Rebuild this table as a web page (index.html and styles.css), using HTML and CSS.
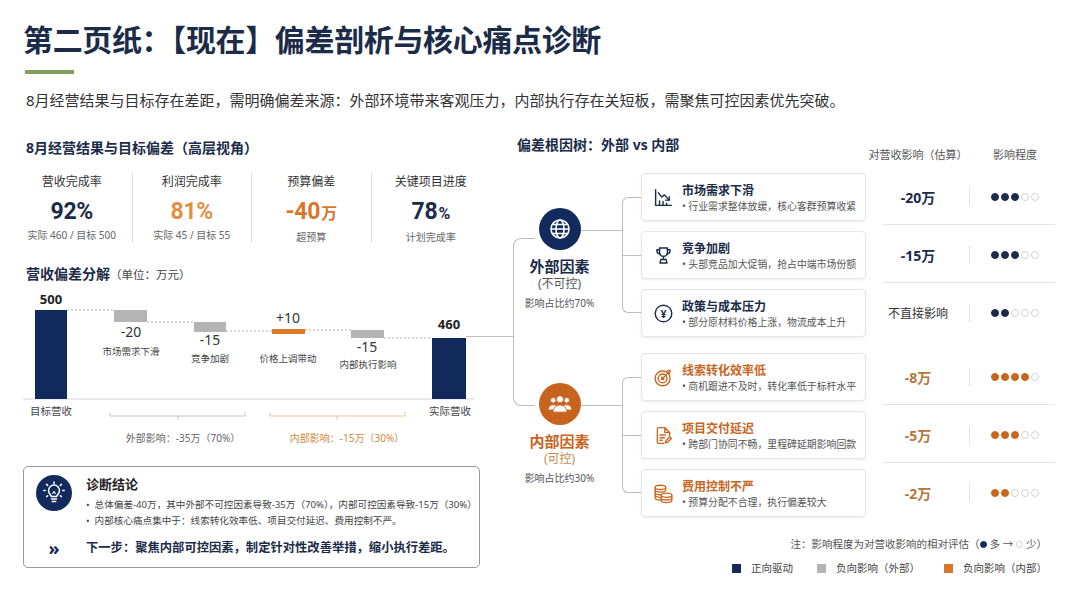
FILE: index.html
```html
<!DOCTYPE html>
<html lang="zh-CN">
<head>
<meta charset="utf-8">
<title>偏差剖析与核心痛点诊断</title>
<link rel="stylesheet" href="styles.css">
</head>
<body>
<div class="page">
  <header class="hd">
    <h1 class="title">第二页纸：【现在】偏差剖析与核心痛点诊断</h1>
    <div class="accent"></div>
    <p class="lead">8月经营结果与目标存在差距，需明确偏差来源：外部环境带来客观压力，内部执行存在关短板，需聚焦可控因素优先突破。</p>
  </header>

  <main class="main">
    <section class="left">
      <h2 class="sec first">8月经营结果与目标偏差（高层视角）</h2>
      <div class="kpis">
        <div class="kpi">
          <div class="kpi-l">营收完成率</div>
          <div class="kpi-v navy">92%</div>
          <div class="kpi-s">实际 460 / 目标 500</div>
        </div>
        <div class="kpi">
          <div class="kpi-l">利润完成率</div>
          <div class="kpi-v amber">81%</div>
          <div class="kpi-s">实际 45 / 目标 55</div>
        </div>
        <div class="kpi">
          <div class="kpi-l">预算偏差</div>
          <div class="kpi-v orange">-40<span class="small">万</span></div>
          <div class="kpi-s">超预算</div>
        </div>
        <div class="kpi">
          <div class="kpi-l">关键项目进度</div>
          <div class="kpi-v navy">78<span class="small">%</span></div>
          <div class="kpi-s">计划完成率</div>
        </div>
      </div>

      <h2 class="sec sec2">营收偏差分解<span class="unit">（单位：万元）</span></h2>
      <svg class="wf" width="457" height="162" viewBox="23 284 457 162">
        <line class="axis" x1="23" y1="398" x2="475" y2="398"/>
        <g class="dash">
          <line x1="67" y1="309" x2="114" y2="309"/>
          <line x1="147" y1="321" x2="194" y2="321"/>
          <line x1="226" y1="330" x2="272" y2="330"/>
          <line x1="305" y1="329" x2="351" y2="329"/>
          <line x1="384" y1="337" x2="432" y2="337"/>
        </g>
        <rect class="b-navy" x="35" y="309" width="32" height="89"/>
        <rect class="b-gray" x="114" y="309" width="33" height="12"/>
        <rect class="b-gray" x="194" y="321" width="32" height="10"/>
        <rect class="b-orange" x="272" y="328" width="33" height="5"/>
        <rect class="b-gray" x="351" y="329" width="33" height="8"/>
        <rect class="b-navy" x="432" y="337" width="34" height="61"/>

        <text class="t-tot" x="51" y="303" text-anchor="middle">500</text>
        <text class="t-num" x="131" y="336" text-anchor="middle">-20</text>
        <text class="t-lab" x="131" y="354" text-anchor="middle">市场需求下滑</text>
        <text class="t-num" x="210" y="344" text-anchor="middle">-15</text>
        <text class="t-lab" x="210" y="361" text-anchor="middle">竞争加剧</text>
        <text class="t-num" x="288" y="322" text-anchor="middle">+10</text>
        <text class="t-lab" x="288" y="361" text-anchor="middle">价格上调带动</text>
        <text class="t-num" x="367" y="351" text-anchor="middle">-15</text>
        <text class="t-lab" x="368" y="367" text-anchor="middle">内部执行影响</text>
        <text class="t-tot" x="449" y="328" text-anchor="middle">460</text>

        <text class="t-ax" x="51" y="414" text-anchor="middle">目标营收</text>
        <text class="t-ax" x="450" y="414" text-anchor="middle">实际营收</text>

        <path class="br-g" d="M110 411V415H245V411M178 415V419"/>
        <path class="br-o" d="M270 411V415H405V411M337 415V419"/>
        <text class="t-ext" x="183" y="441" text-anchor="middle">外部影响：-35万（70%）</text>
        <text class="t-int" x="347" y="441" text-anchor="middle">内部影响：-15万（30%）</text>
      </svg>

      <div class="diag">
        <div class="diag-row">
          <div class="diag-ic">
            <svg width="24" height="24" viewBox="0 0 24 24" fill="none" stroke="#fff" stroke-width="1.5" stroke-linecap="round" stroke-linejoin="round">
              <path d="M9.2 15.5c0-1.6-2.7-2.7-2.7-5.9a5.5 5.5 0 0 1 11 0c0 3.2-2.7 4.300-2.7 5.9z"/>
              <path d="M9.5 18h5M10.3 20.5h3.4"/>
              <path d="M12 10.5l-1.3 2M12 10.5l1.3 2" stroke-width="1.1"/>
              <path d="M12 1v1.4M3.2 9.6H1.8M22.2 9.6h-1.4M4.6 3.4l1 1M19.4 3.4l-1 1M4.6 15.6l1-.9M19.4 15.6l-1-.9"/>
            </svg>
          </div>
          <div class="diag-txt">
            <div class="diag-t">诊断结论</div>
            <ul class="diag-list">
              <li>总体偏差-40万，其中外部不可控因素导致-35万（70%），内部可控因素导致-15万（30%）</li>
              <li>内部核心痛点集中于：线索转化效率低、项目交付延迟、费用控制不严。</li>
            </ul>
          </div>
        </div>
        <div class="diag-next">
          <span class="chev">»</span>
          <span class="next-t">下一步：聚焦内部可控因素，制定针对性改善举措，缩小执行差距。</span>
        </div>
      </div>
    </section>

    <section class="right">
      <div class="bracket"></div>
      <div class="link"></div>

      <div class="rhead">
        <h2 class="sec">偏差根因树：外部 vs 内部</h2>
        <div class="cols">
          <span class="c1">对营收影响（估算）</span>
          <span class="c2">影响程度</span>
        </div>
      </div>

      <div class="group ext">
        <div class="factor">
          <div class="fc-circle">
            <svg width="24" height="24" viewBox="0 0 24 24" fill="none" stroke="#fff" stroke-width="1.6">
              <circle cx="12" cy="12" r="9"/>
              <ellipse cx="12" cy="12" rx="4" ry="9"/>
              <path d="M3 12h18M4.6 7.5h14.8M4.6 16.5h14.8"/>
            </svg>
          </div>
          <div class="fc-name">外部因素</div>
          <div class="fc-sub">(不可控)</div>
          <div class="fc-pct">影响占比约70%</div>
        </div>
        <div class="rows">
          <div class="row">
            <div class="card">
              <svg class="ic" viewBox="0 0 24 24" fill="none" stroke="#1b2b48" stroke-width="1.6" stroke-linecap="round" stroke-linejoin="round">
                <path d="M3 3v18h18"/>
                <path d="M6 6.5l4 5 3-2.5 5.5 6"/>
                <path d="M18.5 11v4h-4"/>
                <path d="M7.5 21v-5M11.5 21v-4.5M15.5 21v-2.5"/>
              </svg>
              <div class="card-b">
                <div class="card-t">市场需求下滑</div>
                <div class="card-d">• 行业需求整体放缓，核心客群预算收紧</div>
              </div>
            </div>
            <div class="met"><div class="m">
              <span class="val">-20万</span><span class="vdiv"></span>
              <span class="dots"><i class="dot on"></i><i class="dot on"></i><i class="dot on"></i><i class="dot"></i><i class="dot"></i></span>
            </div></div>
          </div>
          <div class="row">
            <div class="card mid">
              <svg class="ic" viewBox="0 0 24 24" fill="none" stroke="#1b2b48" stroke-width="1.6" stroke-linecap="round" stroke-linejoin="round">
                <path d="M7.5 3.5h9v5a4.5 4.5 0 0 1-9 0z"/>
                <path d="M7.5 5.5h-3v1.2A3.6 3.6 0 0 0 8 10.3M16.5 5.5h3v1.2A3.6 3.6 0 0 1 16 10.3"/>
                <path d="M12 13v3.5M9 16.5h6l1 4H8z"/>
              </svg>
              <div class="card-b">
                <div class="card-t">竞争加剧</div>
                <div class="card-d">• 头部竞品加大促销，抢占中端市场份额</div>
              </div>
            </div>
            <div class="met"><div class="m">
              <span class="val">-15万</span><span class="vdiv"></span>
              <span class="dots"><i class="dot on"></i><i class="dot on"></i><i class="dot on"></i><i class="dot"></i><i class="dot"></i></span>
            </div></div>
          </div>
          <div class="row">
            <div class="card">
              <svg class="ic" viewBox="0 0 24 24" fill="none" stroke="#1b2b48" stroke-width="1.6">
                <circle cx="12" cy="12" r="9.5"/>
                <text x="12" y="16.6" text-anchor="middle" class="yen">¥</text>
              </svg>
              <div class="card-b">
                <div class="card-t">政策与成本压力</div>
                <div class="card-d">• 部分原材料价格上涨，物流成本上升</div>
              </div>
            </div>
            <div class="met"><div class="m">
              <span class="val plain">不直接影响</span><span class="vdiv"></span>
              <span class="dots"><i class="dot on"></i><i class="dot on"></i><i class="dot"></i><i class="dot"></i><i class="dot"></i></span>
            </div></div>
          </div>
        </div>
      </div>

      <div class="group int">
        <div class="factor">
          <div class="fc-circle">
            <svg width="26" height="26" viewBox="0 0 24 24" fill="#fff" stroke="#c8631d" stroke-width="0.8">
              <circle cx="5.8" cy="8.6" r="2.5"/>
              <circle cx="18.2" cy="8.6" r="2.5"/>
              <path d="M1 17.5c0-2.9 2-4.9 4.8-4.9s4.8 2 4.8 4.9z"/>
              <path d="M13.4 17.5c0-2.9 2-4.9 4.8-4.9s4.8 2 4.8 4.9z"/>
              <circle cx="12" cy="7.6" r="3.3"/>
              <path d="M5.6 19.5c0-3.8 2.8-6.6 6.4-6.6s6.4 2.8 6.4 6.6z"/>
            </svg>
          </div>
          <div class="fc-name">内部因素</div>
          <div class="fc-sub">(可控)</div>
          <div class="fc-pct">影响占比约30%</div>
        </div>
        <div class="rows">
          <div class="row">
            <div class="card">
              <svg class="ic" viewBox="0 0 24 24" fill="none" stroke="#c8661f" stroke-width="1.6" stroke-linecap="round" stroke-linejoin="round">
                <circle cx="11" cy="13" r="8.5"/>
                <circle cx="11" cy="13" r="5"/>
                <circle cx="11" cy="13" r="1.4"/>
                <path d="M11 13l8-8M16.2 4.4l3.3-.6-.6 3.3"/>
              </svg>
              <div class="card-b">
                <div class="card-t">线索转化效率低</div>
                <div class="card-d">• 商机跟进不及时，转化率低于标杆水平</div>
              </div>
            </div>
            <div class="met"><div class="m">
              <span class="val">-8万</span><span class="vdiv"></span>
              <span class="dots"><i class="dot on"></i><i class="dot on"></i><i class="dot on"></i><i class="dot on"></i><i class="dot"></i></span>
            </div></div>
          </div>
          <div class="row">
            <div class="card mid">
              <svg class="ic" viewBox="0 0 24 24" fill="none" stroke="#c8661f" stroke-width="1.6" stroke-linecap="round" stroke-linejoin="round">
                <path d="M13.5 3H6.5A1.5 1.5 0 0 0 5 4.5v15A1.5 1.5 0 0 0 6.5 21H12"/>
                <path d="M13.5 3L19 8.5V12M13.5 3v5.5H19"/>
                <path d="M8 11.5h6M8 14.5h5M8 17.5h2.5"/>
                <path d="M14 20.5l.8-2.6 4.4-4.4 1.8 1.8-4.4 4.4z"/>
              </svg>
              <div class="card-b">
                <div class="card-t">项目交付延迟</div>
                <div class="card-d">• 跨部门协同不畅，里程碑延期影响回款</div>
              </div>
            </div>
            <div class="met"><div class="m">
              <span class="val">-5万</span><span class="vdiv"></span>
              <span class="dots"><i class="dot on"></i><i class="dot on"></i><i class="dot on"></i><i class="dot"></i><i class="dot"></i></span>
            </div></div>
          </div>
          <div class="row">
            <div class="card">
              <svg class="ic" viewBox="0 0 24 24" fill="none" stroke="#c8661f" stroke-width="1.5" stroke-linecap="round" stroke-linejoin="round">
                <ellipse cx="8.5" cy="5" rx="6" ry="2.4"/>
                <path d="M2.5 5v3c0 1.3 2.7 2.4 6 2.4s6-1.1 6-2.4V5"/>
                <path d="M2.5 8v3c0 1.3 2.7 2.4 6 2.4"/>
                <path d="M2.5 11v3c0 1.3 2.7 2.4 6 2.4"/>
                <path d="M2.5 14v3c0 1.3 2.7 2.4 6 2.4"/>
                <ellipse cx="15.5" cy="14" rx="6" ry="2.4"/>
                <path d="M9.5 14v3c0 1.3 2.7 2.4 6 2.4s6-1.1 6-2.4v-3"/>
                <path d="M9.5 17v3c0 1.3 2.7 2.4 6 2.4s6-1.1 6-2.4v-3"/>
              </svg>
              <div class="card-b">
                <div class="card-t">费用控制不严</div>
                <div class="card-d">• 预算分配不合理，执行偏差较大</div>
              </div>
            </div>
            <div class="met"><div class="m">
              <span class="val">-2万</span><span class="vdiv"></span>
              <span class="dots"><i class="dot on"></i><i class="dot on"></i><i class="dot"></i><i class="dot"></i><i class="dot"></i></span>
            </div></div>
          </div>
        </div>
      </div>

      <p class="note">注：影响程度为对营收影响的相对评估（<i class="nd on"></i>多 → <i class="nd"></i>少）</p>
      <div class="legend">
        <span class="lg"><i class="sw sw-navy"></i>正向驱动</span>
        <span class="lg"><i class="sw sw-gray"></i>负向影响（外部）</span>
        <span class="lg"><i class="sw sw-orange"></i>负向影响（内部）</span>
      </div>
    </section>
  </main>
</div>
</body>
</html>
```

FILE: styles.css
```css
* { box-sizing: border-box; margin: 0; padding: 0; }
html, body { width: 1080px; height: 608px; overflow: hidden; background: #fff; }
body {
  font-family: "Noto Sans", "Noto Sans CJK SC", sans-serif;
  color: #222;
}
.page { padding: 18px 20px 0 23px; }

/* header */
.title {
  font-family: "Noto Sans CJK SC", sans-serif;
  font-size: 30px;
  font-weight: 700;
  line-height: 40px;
  letter-spacing: -0.35px;
  color: #1b2b48;
}
.accent { width: 49px; height: 4px; background: #7ea05a; margin-top: 12px; margin-left: 2px; }
.lead {
  margin-top: 16px;
  padding-left: 3px;
  font-size: 15px;
  line-height: 20px;
  color: #333;
  white-space: nowrap;
}

/* layout */
.main { display: flex; margin-top: 25px; }
.left { width: 457px; flex: none; }
.right { width: 547px; margin-left: 33px; flex: none; position: relative; }

.sec {
  font-family: "Noto Sans", "Noto Sans CJK SC", sans-serif;
  font-size: 14px;
  font-weight: 700;
  line-height: 20px;
  color: #1b2b48;
  padding-left: 3px;
}
.sec.first { margin-top: 3px; }
.sec2 { margin-top: 22px; }
.unit { font-size: 11.5px; font-weight: 400; color: #444; }

/* KPI */
.kpis { display: grid; grid-template-columns: repeat(4, 1fr); margin: 14px -10px 0 -11px; }
.kpi { text-align: center; height: 70px; }
.kpi + .kpi { border-left: 1px solid #e2e2e2; }
.kpi-l { font-size: 12px; line-height: 20px; color: #333; }
.kpi-v {
  font-family: Roboto, "Noto Sans CJK SC", sans-serif;
  font-size: 23px;
  font-weight: 700;
  line-height: 30px;
  margin-top: 5px;
  letter-spacing: -0.3px;
}
.kpi-v .small { font-size: 16px; margin-left: 1px; }
.kpi-s { font-size: 10px; line-height: 14px; margin-top: 1px; color: #666; }
.navy { color: #1b2b48; }
.amber { color: #e0913f; }
.orange { color: #d9762a; }

/* waterfall */
.wf { display: block; }
.wf text { font-family: "Noto Sans", "Noto Sans CJK SC", sans-serif; }
.axis { stroke: #d6d6d6; stroke-width: 1; }
.dash line { stroke: #999; stroke-width: 0.8; stroke-dasharray: 2 2; }
.b-navy { fill: #12295c; }
.b-gray { fill: #b4b4b4; }
.b-orange { fill: #de7a26; }
.t-tot { font-size: 13px; font-weight: 700; fill: #222; }
.t-num { font-size: 14px; fill: #333; }
.t-lab { font-size: 9.5px; fill: #444; }
.t-ax { font-size: 10.5px; fill: #444; }
.t-ext { font-size: 10px; fill: #666; }
.t-int { font-size: 10px; fill: #d08a40; }
.br-g { fill: none; stroke: #c4c4c4; stroke-width: 1; }
.br-o { fill: none; stroke: #ebc39a; stroke-width: 1; }

/* diagnosis */
.diag {
  margin-top: 19px;
  border: 1px solid #9b9b9b;
  border-radius: 5px;
  padding: 8px 2px 10px 12px;
}
.diag-row { display: flex; }
.diag-ic {
  width: 36px; height: 36px; flex: none;
  border-radius: 50%;
  background: #132a5c;
  display: flex; align-items: center; justify-content: center;
  margin-right: 14px;
}
.diag-t { font-size: 13px; font-weight: 700; line-height: 18px; color: #222; }
.diag-list { list-style: none; margin-top: 4px; font-size: 9.6px; line-height: 16px; color: #444; white-space: nowrap; }
.diag-list li::before { content: "•"; margin-right: 5px; }
.diag-next { display: flex; align-items: center; margin-top: 10px; line-height: 18px; }
.chev { width: 36px; margin-right: 14px; text-align: center; font-size: 18px; font-weight: 700; color: #132a5c; }
.next-t { font-size: 12.3px; font-weight: 700; color: #1b2b48; white-space: nowrap; }

/* tree */
.bracket {
  position: absolute; left: 0; top: 103px;
  width: 22px; height: 168px;
  border: 1px solid #bdbdbd; border-right: none;
  border-radius: 8px 0 0 8px;
}
.link { position: absolute; left: -47px; top: 201px; width: 47px; border-top: 1px solid #bdbdbd; }

.rhead { display: flex; height: 28px; }
.rhead .sec { padding-left: 4px; }
.cols { margin-left: auto; margin-right: 5px; display: flex; align-self: flex-end; font-size: 11px; line-height: 16px; color: #555; }
.c1 { width: 70px; display: flex; justify-content: center; white-space: nowrap; }
.c2 { width: 85px; margin-left: 17px; padding-left: 5px; text-align: center; }

.group { display: flex; margin-top: 10px; }
.group.int { margin-top: 16px; }
.factor { width: 93px; flex: none; display: flex; flex-direction: column; align-items: center; }
.ext .factor { padding-top: 35px; }
.int .factor { padding-top: 30px; }
.fc-circle {
  width: 42px; height: 42px; border-radius: 50%;
  display: flex; align-items: center; justify-content: center;
  position: relative;
}
.ext .fc-circle { background: #132a5c; }
.int .fc-circle { background: #c8631d; }
.fc-circle::after {
  content: ""; position: absolute; left: 100%; top: 22px;
  width: 42px; border-top: 1px solid #bdbdbd;
}
.fc-name { font-family: "Noto Sans CJK SC", sans-serif; font-size: 15px; font-weight: 700; line-height: 20px; margin-top: 6px; }
.ext .fc-name { color: #1b2b48; }
.int .fc-name { color: #c8631d; }
.fc-sub { font-size: 12px; line-height: 16px; color: #555; }
.int .fc-sub { color: #c98a4f; }
.fc-pct { font-size: 10px; line-height: 16px; margin-top: 3px; color: #555; }

.rows { margin-left: 35px; position: relative; display: flex; flex-direction: column; gap: 10px; }
.rows::before {
  content: ""; position: absolute; left: -19px; top: 24px; bottom: 24px; width: 19px;
  border: 1px solid #bdbdbd; border-right: none; border-radius: 6px 0 0 6px;
}
.row { display: flex; height: 48px; }
.card {
  width: 225px; height: 48px; flex: none;
  border: 1px solid #e6e6e6; border-radius: 4px;
  box-shadow: 0 1px 3px rgba(0, 0, 0, 0.07);
  background: #fff;
  display: flex; align-items: center;
  padding: 0 6px 0 12px;
  position: relative;
}
.card.mid::before {
  content: ""; position: absolute; left: -20px; top: 23px; width: 19px;
  border-top: 1px solid #bdbdbd;
}
.ic { width: 21px; height: 21px; flex: none; margin-right: 8px; margin-left: -1px; }
.yen { font-family: "Noto Sans", sans-serif; font-size: 12px; font-weight: 700; fill: #1b2b48; stroke: none; }
.card-b { display: flex; flex-direction: column; }
.card-t { font-family: "Noto Sans CJK SC", sans-serif; font-size: 12px; font-weight: 700; line-height: 18px; color: #1b2b48; }
.int .card-t { color: #c8661f; }
.card-d { font-size: 9.9px; line-height: 14px; color: #555; white-space: nowrap; }

.met { flex: 1; padding-left: 17px; display: flex; }
.m { display: flex; align-items: center; width: 172px; height: 100%; position: relative; }
.row:not(:last-child) .m::after {
  content: ""; position: absolute; left: 0; right: 0; bottom: -4px;
  border-top: 1px solid #e3e3e3;
}
.val { width: 70px; display: flex; justify-content: center; white-space: nowrap; font-size: 14px; font-weight: 700; color: #1b2b48; }
.int .val { color: #b5773b; }
.val.plain { font-size: 12px; font-weight: 400; color: #333; }
.vdiv { width: 1px; height: 18px; background: #e3e3e3; margin-left: 16px; flex: none; }
.dots { flex: 1; display: flex; justify-content: center; padding-left: 5px; gap: 2px; }
.dot { display: block; width: 8px; height: 8px; border-radius: 50%; border: 1px solid #d2d2d2; background: #fff; }
.dot.on { background: #1b2b48; border-color: #1b2b48; }
.int .dot.on { background: #c8661f; border-color: #c8661f; }

.note { margin-top: 19px; padding-right: 13px; text-align: right; font-size: 10.5px; line-height: 16px; color: #555; white-space: nowrap; }
.nd { display: inline-block; width: 7px; height: 7px; border-radius: 50%; border: 1px solid #d0d0d0; margin: 0 3px 1px 0; vertical-align: middle; }
.nd.on { background: #132a5c; border-color: #132a5c; }
.legend { display: flex; justify-content: flex-end; gap: 24px; margin-top: 8px; padding-right: 13px; font-size: 10.5px; line-height: 16px; color: #444; }
.lg { display: flex; align-items: center; gap: 10px; white-space: nowrap; }
.sw { display: block; width: 9px; height: 9px; }
.sw-navy { background: #132a5c; }
.sw-gray { background: #b4b4b4; }
.sw-orange { background: #d9762a; }
```
